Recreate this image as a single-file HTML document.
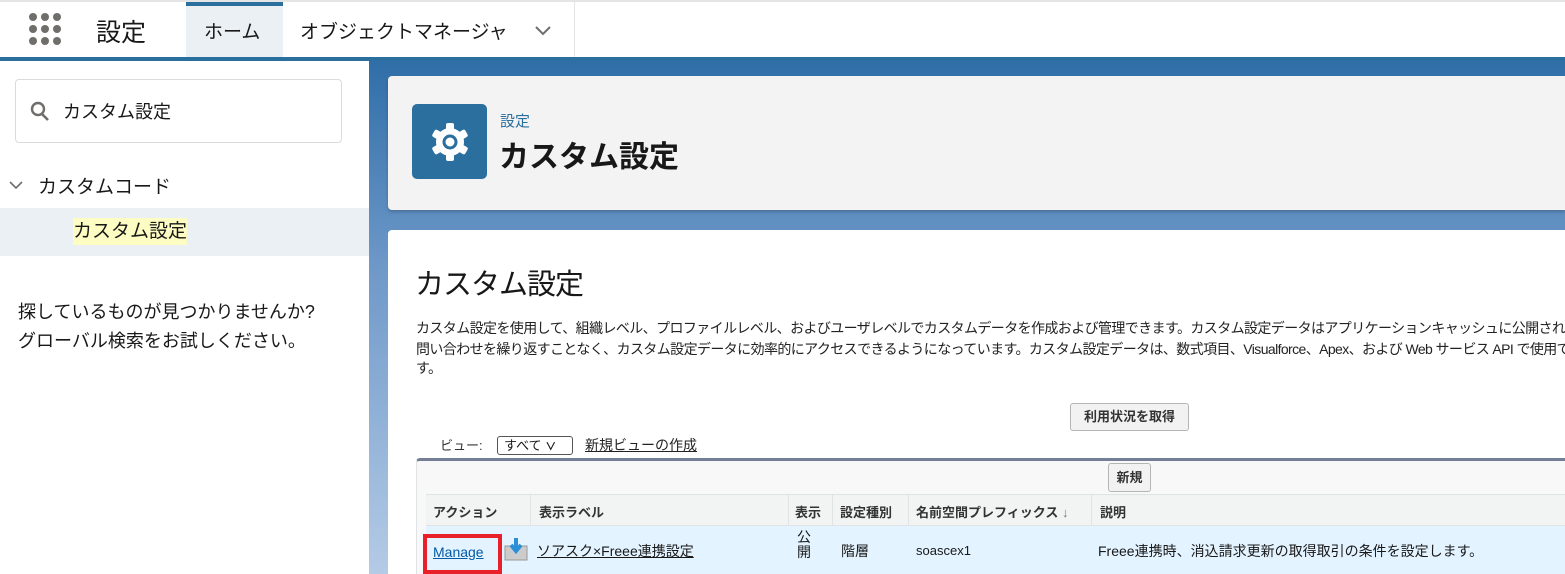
<!DOCTYPE html>
<html><head><meta charset="utf-8">
<style>
*{margin:0;padding:0;box-sizing:border-box}
body{width:1565px;height:574px;overflow:hidden;position:relative;background:#fff;font-family:"Liberation Sans","Noto Sans CJK JP",sans-serif;color:#181818}
.abs{position:absolute}
.top{left:0;top:0;width:1565px;height:57px;background:#fff;border-top:2px solid #e5e5e5}
.bluebar{left:0;top:57px;width:1565px;height:4px;background:#2b6f9e}
.side{left:0;top:61px;width:369px;height:513px;background:#fff}
.content{left:369px;top:61px;width:1196px;height:513px;background:linear-gradient(#2f6ea8,#6e98c8 40%,#b4cbe6)}
.dot{width:8px;height:8px;border-radius:50%;background:#706e6b;position:absolute}
.nw{white-space:nowrap}
.desc{left:416px;width:1149px;overflow:hidden;font-size:14px;letter-spacing:-0.6px;line-height:17px;color:#222;white-space:nowrap}
</style></head><body>
<div class="abs top"></div>
<div class="abs" style="left:29px;top:13px;width:34px;height:34px">
<div class="dot" style="left:0;top:0"></div><div class="dot" style="left:12px;top:0"></div><div class="dot" style="left:24px;top:0"></div>
<div class="dot" style="left:0;top:12px"></div><div class="dot" style="left:12px;top:12px"></div><div class="dot" style="left:24px;top:12px"></div>
<div class="dot" style="left:0;top:24px"></div><div class="dot" style="left:12px;top:24px"></div><div class="dot" style="left:24px;top:24px"></div>
</div>
<div class="abs nw" style="left:96px;top:13px;font-size:25px;color:#181818">設定</div>
<div class="abs" style="left:186px;top:2px;width:97px;height:55px;background:#eaf0f4;border-top:4px solid #2b6f9e"></div>
<div class="abs nw" style="left:204px;top:17px;font-size:19px">ホーム</div>
<div class="abs" style="left:283px;top:2px;width:292px;height:55px;border-right:1px solid #e5e5e5"></div>
<div class="abs nw" style="left:300px;top:17px;font-size:19px">オブジェクトマネージャ</div>
<svg class="abs" style="left:534px;top:25px" width="18" height="12"><path d="M2 2l7 7 7-7" stroke="#706e6b" stroke-width="2" fill="none"/></svg>
<div class="abs bluebar"></div>
<div class="abs side"></div>
<div class="abs" style="left:15px;top:79px;width:327px;height:64px;border:1px solid #dddbda;border-radius:4px"></div>
<svg class="abs" style="left:30px;top:101px" width="20" height="22"><circle cx="8" cy="8" r="6" stroke="#706e6b" stroke-width="2.4" fill="none"/><path d="M12 13l6 6" stroke="#706e6b" stroke-width="2.6"/></svg>
<div class="abs nw" style="left:63px;top:98px;font-size:18px">カスタム設定</div>
<svg class="abs" style="left:8px;top:180px" width="16" height="12"><path d="M2 2l6 6 6-6" stroke="#706e6b" stroke-width="1.6" fill="none"/></svg>
<div class="abs nw" style="left:38px;top:172px;font-size:19px">カスタムコード</div>
<div class="abs" style="left:0;top:208px;width:369px;height:48px;background:#eaf0f4"></div>
<div class="abs nw" style="left:73px;top:218px;font-size:19px;background:#fdfcc3;line-height:27px">カスタム設定</div>
<div class="abs" style="left:18px;top:298px;font-size:18px;line-height:29px">探しているものが見つかりませんか?<br>グローバル検索をお試しください。</div>

<div class="abs content"></div>
<div class="abs" style="left:388px;top:76px;width:1177px;height:134px;background:#f3f3f3;border-radius:4px 0 0 4px;box-shadow:0 2px 3px rgba(0,0,0,.2)"></div>
<div class="abs" style="left:412px;top:104px;width:75px;height:75px;background:#2b6f9e;border-radius:5px"></div>
<svg class="abs" style="left:426px;top:118px" width="48" height="48" viewBox="0 0 48 48"><g fill="#fff"><circle cx="24" cy="24" r="14"/><g><rect x="20" y="5" width="8" height="38" rx="2"/><rect x="20" y="5" width="8" height="38" rx="2" transform="rotate(60 24 24)"/><rect x="20" y="5" width="8" height="38" rx="2" transform="rotate(120 24 24)"/></g></g><circle cx="24" cy="24" r="7.5" fill="#2b6f9e"/><circle cx="24" cy="24" r="4.5" fill="#fff"/></svg>
<div class="abs nw" style="left:500px;top:110px;font-size:15px;color:#2b6f9e">設定</div>
<div class="abs nw" style="left:499px;top:132px;font-size:30px;font-weight:bold">カスタム設定</div>

<div class="abs" style="left:388px;top:230px;width:1177px;height:344px;background:#fff;border-radius:4px 0 0 0"></div>
<div class="abs nw" style="left:415px;top:261px;font-size:29px;letter-spacing:-1px">カスタム設定</div>
<div class="abs desc" style="top:320px">カスタム設定を使用して、組織レベル、プロファイルレベル、およびユーザレベルでカスタムデータを作成および管理できます。カスタム設定データはアプリケーションキャッシュに公開されるため、データベースへの繰り返し</div>
<div class="abs desc" style="top:341px">問い合わせを繰り返すことなく、カスタム設定データに効率的にアクセスできるようになっています。カスタム設定データは、数式項目、Visualforce、Apex、および Web サービス API で使用できま</div>
<div class="abs desc" style="top:360px">す。</div>

<div class="abs nw" style="left:1070px;top:403px;height:28px;width:119px;border:1px solid #b5b5b5;border-radius:3px;background:#f2f2f2;font-size:13px;font-weight:bold;color:#333;line-height:26px;text-align:center">利用状況を取得</div>
<div class="abs nw" style="left:440px;top:435px;font-size:13px;color:#333">ビュー:</div>
<div class="abs nw" style="left:497px;top:436px;width:76px;height:19px;border:1px solid #555;border-radius:3px;font-size:13px;line-height:17px;padding-left:6px">すべて <span style="font-size:11px;font-weight:bold">∨</span></div>
<div class="abs nw" style="left:585px;top:435px;font-size:14px;text-decoration:underline;color:#222">新規ビューの作成</div>

<div class="abs" style="left:416px;top:458px;width:1149px;height:116px;background:#f8f8f8;border-top:3px solid #747e96;border-left:1px solid #e0e3e5;border-radius:4px 0 0 0"></div>
<div class="abs nw" style="left:1108px;top:463px;width:43px;height:29px;border:1px solid #b5b5b5;border-radius:3px;background:#f2f2f2;font-size:13px;font-weight:bold;color:#333;line-height:27px;text-align:center">新規</div>
<div class="abs" style="left:426px;top:494px;width:1139px;height:32px;background:#f2f3f3;border-top:1px solid #e0e3e5;border-bottom:1px solid #e0e3e5"></div>
<div class="abs" style="left:426px;top:526px;width:1139px;height:48px;background:#e3f3ff"></div>
<div class="abs" style="left:530px;top:494px;width:1px;height:32px;background:#e0e3e5"></div>
<div class="abs" style="left:788px;top:494px;width:1px;height:32px;background:#e0e3e5"></div>
<div class="abs" style="left:832px;top:494px;width:1px;height:32px;background:#e0e3e5"></div>
<div class="abs" style="left:908px;top:494px;width:1px;height:32px;background:#e0e3e5"></div>
<div class="abs" style="left:1091px;top:494px;width:1px;height:32px;background:#e0e3e5"></div>
<div class="abs nw" style="left:433px;top:502px;font-size:13px;font-weight:bold;color:#333">アクション</div>
<div class="abs nw" style="left:539px;top:502px;font-size:13px;font-weight:bold;color:#333">表示ラベル</div>
<div class="abs nw" style="left:795px;top:502px;font-size:13px;font-weight:bold;color:#333">表示</div>
<div class="abs nw" style="left:840px;top:502px;font-size:13px;font-weight:bold;color:#333">設定種別</div>
<div class="abs nw" style="left:916px;top:502px;font-size:13px;font-weight:bold;color:#333">名前空間プレフィックス <span style="color:#777">↓</span></div>
<div class="abs nw" style="left:1100px;top:502px;font-size:13px;font-weight:bold;color:#333">説明</div>

<div class="abs" style="left:423px;top:534px;width:79px;height:40px;border:4px solid #e8202a"></div>
<div class="abs nw" style="left:433px;top:544px;font-size:14px;color:#015ba7;text-decoration:underline">Manage</div>
<svg class="abs" style="left:503px;top:536px" width="26" height="26"><rect x="2" y="10" width="22" height="14" fill="#ccc" stroke="#999"/><path d="M13 2v12M8 9l5 6 5-6" stroke="#2a8fd6" stroke-width="4" fill="none"/></svg>
<div class="abs nw" style="left:537px;top:541px;font-size:14px;text-decoration:underline">ソアスク×Freee連携設定</div>
<div class="abs" style="left:797px;top:530px;font-size:14px;line-height:15px;width:16px">公<br>開</div>
<div class="abs nw" style="left:841px;top:541px;font-size:14px">階層</div>
<div class="abs nw" style="left:916px;top:543px;font-size:13px">soascex1</div>
<div class="abs nw" style="left:1098px;top:541px;font-size:14px">Freee連携時、消込請求更新の取得取引の条件を設定します。</div>
</body></html>
